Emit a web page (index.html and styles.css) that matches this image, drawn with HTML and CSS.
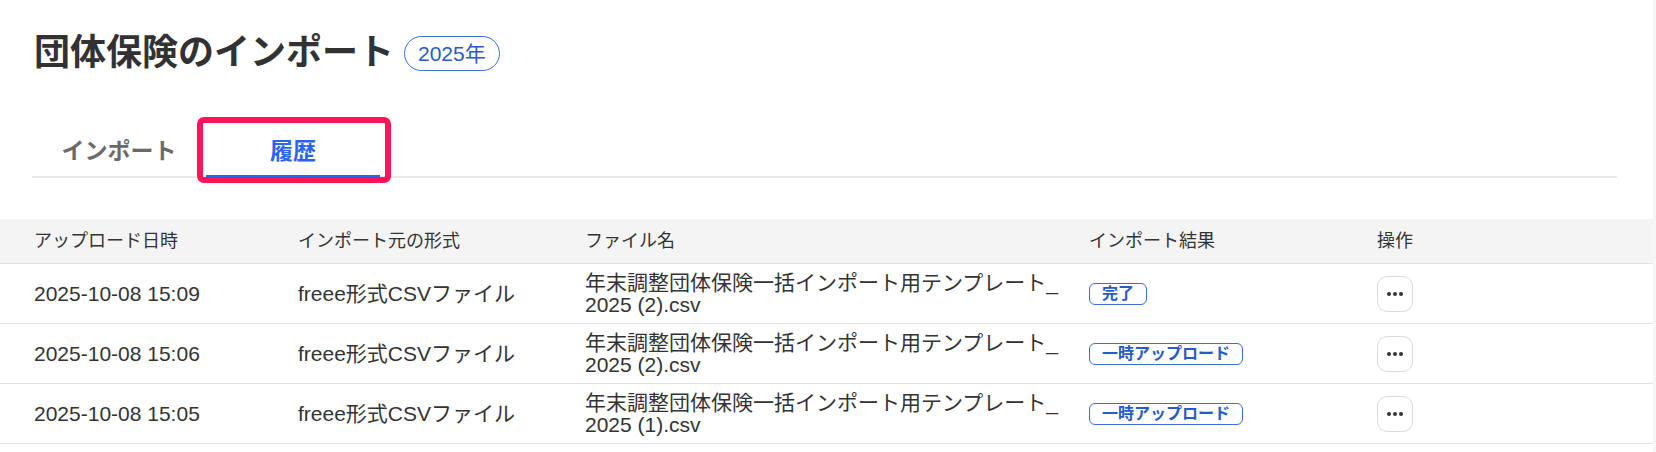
FILE: index.html
```html
<!DOCTYPE html>
<html lang="ja">
  <head>
    <meta charset="utf-8">
    <link rel="stylesheet" href="styles.css">
  </head>
  <body>
    <div class="page">
      <div class="pageHeader">
        <h1 class="pageTitle">団体保険のインポート</h1>
        <span class="yearBadge">2025年</span>
      </div>

      <div class="tabs">
        <button class="tab">インポート</button>
        <button class="tab active">
          履歴
          <span class="highlight"></span>
        </button>
      </div>

      <table class="history">
        <colgroup>
          <col class="colDate">
          <col class="colType">
          <col class="colFile">
          <col class="colResult">
          <col>
        </colgroup>
        <thead>
          <tr>
            <th>アップロード日時</th>
            <th>インポート元の形式</th>
            <th>ファイル名</th>
            <th>インポート結果</th>
            <th>操作</th>
          </tr>
        </thead>
        <tbody>
          <tr>
            <td>2025-10-08 15:09</td>
            <td>freee形式CSVファイル</td>
            <td class="fileName">年末調整団体保険一括インポート用テンプレート_<wbr>2025 (2).csv</td>
            <td><span class="status">完了</span></td>
            <td><button class="moreButton"><svg width="16" height="4" viewBox="0 0 16 4"><circle cx="2" cy="2" r="2"/><circle cx="8" cy="2" r="2"/><circle cx="14" cy="2" r="2"/></svg></button></td>
          </tr>
          <tr>
            <td>2025-10-08 15:06</td>
            <td>freee形式CSVファイル</td>
            <td class="fileName">年末調整団体保険一括インポート用テンプレート_<wbr>2025 (2).csv</td>
            <td><span class="status">一時アップロード</span></td>
            <td><button class="moreButton"><svg width="16" height="4" viewBox="0 0 16 4"><circle cx="2" cy="2" r="2"/><circle cx="8" cy="2" r="2"/><circle cx="14" cy="2" r="2"/></svg></button></td>
          </tr>
          <tr>
            <td>2025-10-08 15:05</td>
            <td>freee形式CSVファイル</td>
            <td class="fileName">年末調整団体保険一括インポート用テンプレート_<wbr>2025 (1).csv</td>
            <td><span class="status">一時アップロード</span></td>
            <td><button class="moreButton"><svg width="16" height="4" viewBox="0 0 16 4"><circle cx="2" cy="2" r="2"/><circle cx="8" cy="2" r="2"/><circle cx="14" cy="2" r="2"/></svg></button></td>
          </tr>
          <tr>
            <td>2025-10-08 15:02</td>
            <td>freee形式CSVファイル</td>
            <td class="fileName">年末調整団体保険一括インポート用テンプレート_<wbr>2025.csv</td>
            <td><span class="status">一時アップロード</span></td>
            <td><button class="moreButton"><svg width="16" height="4" viewBox="0 0 16 4"><circle cx="2" cy="2" r="2"/><circle cx="8" cy="2" r="2"/><circle cx="14" cy="2" r="2"/></svg></button></td>
          </tr>
        </tbody>
      </table>
    </div>
  </body>
</html>
```

FILE: styles.css
```css
html, body {
  margin: 0;
  background-color: #f6f6f6;
  overflow: hidden;
}

body {
  font-family: 'Liberation Sans', 'Noto Sans CJK JP', sans-serif;
  color: #333333;
}

.page {
  width: 1653px;
  min-height: 452px;
  background-color: #ffffff;
}

.pageHeader {
  display: flex;
  align-items: center;
  padding: 31px 0 0 34px;
}

.pageTitle {
  margin: 0;
  font-size: 36px;
  line-height: 44px;
  font-weight: bold;
  color: #323232;
}

.yearBadge {
  margin-left: 10px;
  padding: 0 13px;
  height: 33px;
  line-height: 33px;
  font-size: 21px;
  color: #285ac8;
  border: 1px solid #3b6fd6;
  border-radius: 18px;
}

/* Tabs */
.tabs {
  display: flex;
  margin: 48px 36px 0 32px;
  border-bottom: 2px solid #e8e8e8;
}

.tab {
  position: relative;
  width: 174px;
  height: 52px;
  margin: 0;
  padding: 0;
  border: none;
  background: none;
  font-family: inherit;
  font-size: 23px;
  font-weight: bold;
  color: #6a6a6a;
  cursor: pointer;
}

.tab.active {
  color: #2864f0;
  height: 55px;
  margin-bottom: -2px;
  border-bottom: 3px solid #2864f0;
}

/* annotation frame drawn over the active tab */
.highlight {
  position: absolute;
  top: -6px;
  left: -9px;
  right: -11px;
  bottom: -8px;
  border: 6px solid #ff145a;
  border-radius: 7px;
}

/* History table */
.history {
  width: 1653px;
  margin-top: 41px;
  border-collapse: collapse;
  table-layout: fixed;
}

.colDate {
  width: 286px;
}

.colType {
  width: 287px;
}

.colFile {
  width: 504px;
}

.colResult {
  width: 288px;
}

.history th {
  height: 44px;
  padding: 0 12px;
  text-align: left;
  font-size: 18px;
  font-weight: normal;
  line-height: 24px;
  background-color: #f5f4f4;
  border-bottom: 1px solid #e2e2e2;
}

.history td {
  height: 59px;
  padding: 0 12px;
  font-size: 21px;
  line-height: 22px;
  border-bottom: 1px solid #e2e2e2;
  vertical-align: middle;
}

.history th:first-child, .history td:first-child {
  padding-left: 34px;
}

.status {
  display: inline-block;
  padding: 0 12px;
  font-size: 16px;
  line-height: 20px;
  font-weight: bold;
  color: #285ac8;
  border: 1px solid #3b6fd6;
  border-radius: 6px;
  vertical-align: middle;
}

.moreButton {
  display: flex;
  align-items: center;
  justify-content: center;
  width: 36px;
  height: 36px;
  padding: 0;
  background-color: #ffffff;
  border: 1px solid #dcdcdc;
  border-radius: 10px;
  cursor: pointer;
}

.moreButton svg {
  fill: #333333;
}
```
